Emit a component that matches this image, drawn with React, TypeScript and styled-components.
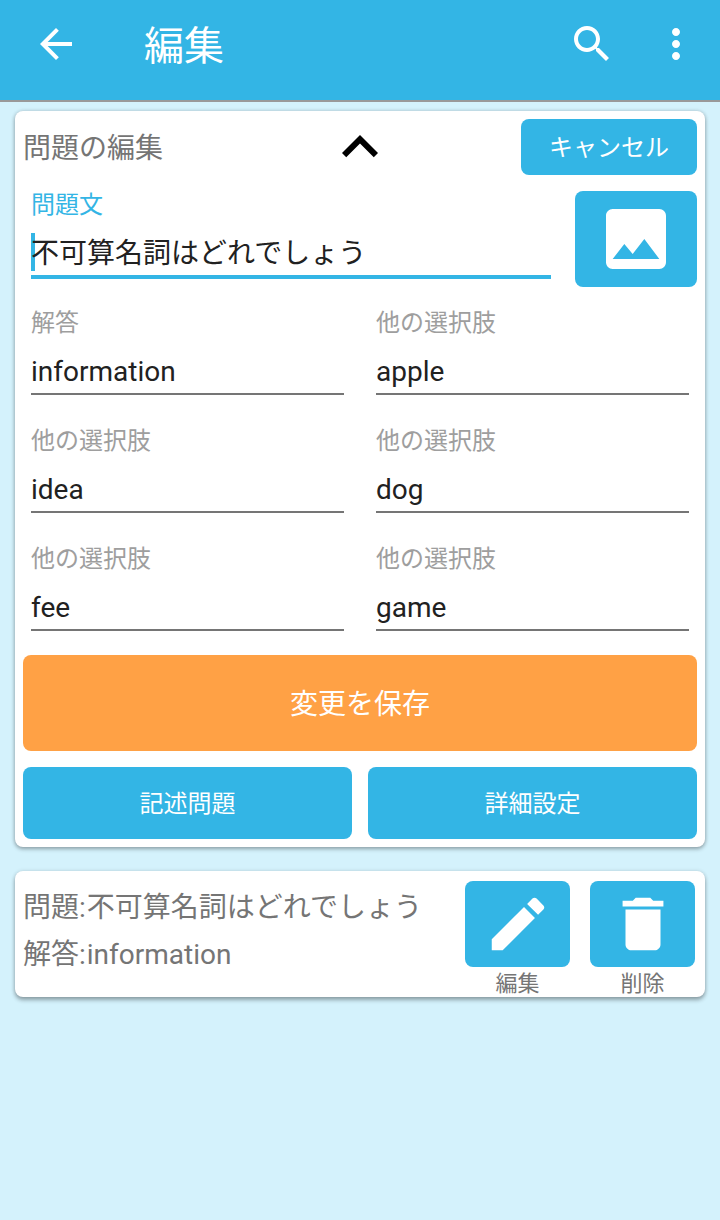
import React from "react";
import styled, { createGlobalStyle } from "styled-components";

const BLUE = "#33b5e5";

const GlobalStyle = createGlobalStyle`
  *, *::before, *::after { box-sizing: border-box; }
  body {
    margin: 0;
    background: #d4f2fc;
    font-family: Roboto, "Noto Sans CJK JP", sans-serif;
    color: #757575;
  }
  button {
    font-family: inherit;
    border: 0;
    padding: 0;
  }
`;

const Screen = styled.div`
  width: 720px;
  min-height: 1220px;
`;

const AppBar = styled.header`
  display: flex;
  align-items: center;
  height: 102px;
  padding: 0 20px 12px 32px;
  background: ${BLUE};
  border-bottom: 2px solid #999999;
  color: #fff;
`;

const AppTitle = styled.h1`
  flex: 1;
  margin: 0 0 0 64px;
  padding-top: 5px;
  font-size: 40px;
  line-height: 48px;
  font-weight: 400;
`;

const BarButton = styled.button<{ $gap?: number }>`
  width: 48px;
  height: 48px;
  margin-left: ${(p) => p.$gap ?? 0}px;
  background: transparent;
  color: #fff;
`;

const Svg = styled.svg<{ $size: number }>`
  display: block;
  flex: none;
  width: ${(p) => p.$size}px;
  height: ${(p) => p.$size}px;
  fill: currentColor;
`;

const Cards = styled.main`
  display: flex;
  flex-direction: column;
  gap: 24px;
  padding: 9px 15px;
`;

const Card = styled.section`
  background: #fff;
  border-radius: 8px;
  box-shadow: 0 2px 4px rgba(0, 0, 0, 0.3), 0 0 4px rgba(0, 0, 0, 0.14);
`;

const EditorCard = styled(Card)`
  height: 736px;
  padding: 8px;
`;

const EditorHeader = styled.div`
  display: grid;
  grid-template-columns: 1fr 72px 1fr;
  grid-template-rows: 56px;
  align-items: center;
  height: 56px;
`;

const EditorTitle = styled.h2`
  margin: 0;
  padding-top: 3px;
  font-size: 28px;
  line-height: 40px;
  font-weight: 400;
`;

const Collapse = styled.button`
  height: 72px;
  background: transparent;
  color: #000;
`;

const Button = styled.button<{ $w?: number; $h: number; $font?: number; $drop?: number; $tone?: string }>`
  display: flex;
  flex: none;
  align-items: center;
  justify-content: center;
  width: ${(p) => (p.$w ? `${p.$w}px` : "100%")};
  height: ${(p) => p.$h}px;
  padding-top: ${(p) => p.$drop ?? 0}px;
  border-radius: 8px;
  background: ${(p) => p.$tone ?? BLUE};
  color: #fff;
  font-size: ${(p) => p.$font ?? 24}px;
  line-height: 1;
`;

const CancelButton = styled(Button)`
  justify-self: end;
`;

const QuestionRow = styled.div`
  display: flex;
  justify-content: space-between;
  margin-top: 16px;
  padding-left: 8px;
`;

const FieldBox = styled.label<{ $active?: boolean }>`
  display: flex;
  flex-direction: column;
  width: ${(p) => (p.$active ? "520px" : "auto")};
  height: ${(p) => (p.$active ? 88 : 86)}px;
  border-bottom: ${(p) => (p.$active ? `4px solid ${BLUE}` : "2px solid #757575")};
`;

const FieldLabel = styled.span<{ $active?: boolean }>`
  font-size: 24px;
  line-height: 28px;
  color: ${(p) => (p.$active ? BLUE : "#9e9e9e")};
`;

const FieldValue = styled.span`
  font-size: 28px;
  line-height: 42px;
  color: #212121;
`;

const Caret = styled.i`
  position: absolute;
  z-index: -1;
  left: 0;
  top: 0;
  width: 4px;
  height: 38px;
  background: ${BLUE};
`;

const ValueLine = styled.span`
  position: relative;
  z-index: 0;
  display: flex;
  flex-direction: column;
  margin-top: auto;
`;

const FieldGrid = styled.div`
  display: grid;
  grid-template-columns: 1fr 1fr;
  gap: 32px;
  padding: 22px 8px 24px;
`;

const ButtonRow = styled.div`
  display: grid;
  grid-template-columns: 1fr 1fr;
  gap: 16px;
  margin-top: 16px;
`;

const ItemCard = styled(Card)`
  display: flex;
  height: 126px;
  padding: 10px 10px 0 8px;
  box-shadow: 0 3px 4px rgba(0, 0, 0, 0.32), 0 0 4px rgba(0, 0, 0, 0.12);
`;

const ItemText = styled.div`
  flex: 1;
  padding-top: 3px;
  font-size: 28px;
  line-height: 47px;
  white-space: nowrap;
`;

const Prefix = styled.span`
  margin-right: 1px;
`;

const Actions = styled.div`
  display: flex;
  gap: 20px;
`;

const Action = styled.div`
  display: flex;
  flex-direction: column;
  align-items: center;
  width: 105px;
  font-size: 22px;
  line-height: 34px;
`;

const ICONS = {
  back: "M20 11H7.83l5.59-5.59L12 4l-8 8 8 8 1.41-1.41L7.83 13H20v-2z",
  search:
    "M15.5 14h-.79l-.28-.27C15.41 12.59 16 11.11 16 9.5 16 5.91 13.09 3 9.5 3S3 5.91 3 9.5 5.91 16 9.5 16c1.61 0 3.09-.59 4.23-1.57l.27.28v.79l5 4.99L20.49 19l-4.99-5zm-6 0C7.01 14 5 11.99 5 9.5S7.01 5 9.5 5 14 7.01 14 9.5 11.99 14 9.5 14z",
  more: "M12 8c1.1 0 2-.9 2-2s-.9-2-2-2-2 .9-2 2 .9 2 2 2zm0 2c-1.1 0-2 .9-2 2s.9 2 2 2 2-.9 2-2-.9-2-2-2zm0 6c-1.1 0-2 .9-2 2s.9 2 2 2 2-.9 2-2-.9-2-2-2z",
  up: "M12 8l-6 6 1.41 1.41L12 10.83l4.59 4.58L18 14z",
  image:
    "M21 19V5c0-1.1-.9-2-2-2H5c-1.1 0-2 .9-2 2v14c0 1.1.9 2 2 2h14c1.1 0 2-.9 2-2zM8.5 13.5l2.5 3.01L14.5 12l4.5 6H5l3.5-4.5z",
  edit: "M3 17.25V21h3.75L17.81 9.94l-3.75-3.75L3 17.25zM20.71 7.04c.39-.39.39-1.02 0-1.41l-2.34-2.34c-.39-.39-1.02-.39-1.41 0l-1.83 1.83 3.75 3.75 1.83-1.83z",
  trash:
    "M6 19c0 1.1.9 2 2 2h8c1.1 0 2-.9 2-2V7H6v12zM19 4h-3.5l-1-1h-5l-1 1H5v2h14V4z",
};

function Icon({ name, size }: { name: keyof typeof ICONS; size: number }) {
  return (
    <Svg $size={size} viewBox="0 0 24 24" aria-hidden="true">
      <path d={ICONS[name]} />
    </Svg>
  );
}

function Field({ label, value, active }: { label: string; value: string; active?: boolean }) {
  return (
    <FieldBox $active={active}>
      <FieldLabel $active={active}>{label}</FieldLabel>
      <ValueLine>
        {active && <Caret />}
        <FieldValue>{value}</FieldValue>
      </ValueLine>
    </FieldBox>
  );
}

const answers = [
  ["解答", "information"],
  ["他の選択肢", "apple"],
  ["他の選択肢", "idea"],
  ["他の選択肢", "dog"],
  ["他の選択肢", "fee"],
  ["他の選択肢", "game"],
];

export default function App() {
  return (
    <Screen lang="ja">
      <GlobalStyle />
      <AppBar>
        <BarButton aria-label="戻る">
          <Icon name="back" size={48} />
        </BarButton>
        <AppTitle>編集</AppTitle>
        <BarButton aria-label="検索">
          <Icon name="search" size={48} />
        </BarButton>
        <BarButton aria-label="メニュー" $gap={36}>
          <Icon name="more" size={48} />
        </BarButton>
      </AppBar>
      <Cards>
        <EditorCard>
          <EditorHeader>
            <EditorTitle>問題の編集</EditorTitle>
            <Collapse aria-label="閉じる">
              <Icon name="up" size={72} />
            </Collapse>
            <CancelButton $w={176} $h={56} $drop={2}>キャンセル</CancelButton>
          </EditorHeader>
          <QuestionRow>
            <Field label="問題文" value="不可算名詞はどれでしょう" active />
            <Button $w={122} $h={96} aria-label="画像">
              <Icon name="image" size={80} />
            </Button>
          </QuestionRow>
          <FieldGrid>
            {answers.map(([label, value]) => (
              <Field key={value} label={label} value={value} />
            ))}
          </FieldGrid>
          <Button $h={96} $font={28} $drop={3} $tone="#ffa145">変更を保存</Button>
          <ButtonRow>
            <Button $h={72} $drop={2}>記述問題</Button>
            <Button $h={72} $drop={2}>詳細設定</Button>
          </ButtonRow>
        </EditorCard>
        <ItemCard>
          <ItemText>
            <div><Prefix>問題:</Prefix>不可算名詞はどれでしょう</div>
            <div><Prefix>解答:</Prefix>information</div>
          </ItemText>
          <Actions>
            <Action>
              <Button $h={86} aria-label="編集する">
                <Icon name="edit" size={70} />
              </Button>
              編集
            </Action>
            <Action>
              <Button $h={86} aria-label="削除する">
                <Icon name="trash" size={70} />
              </Button>
              削除
            </Action>
          </Actions>
        </ItemCard>
      </Cards>
    </Screen>
  );
}
